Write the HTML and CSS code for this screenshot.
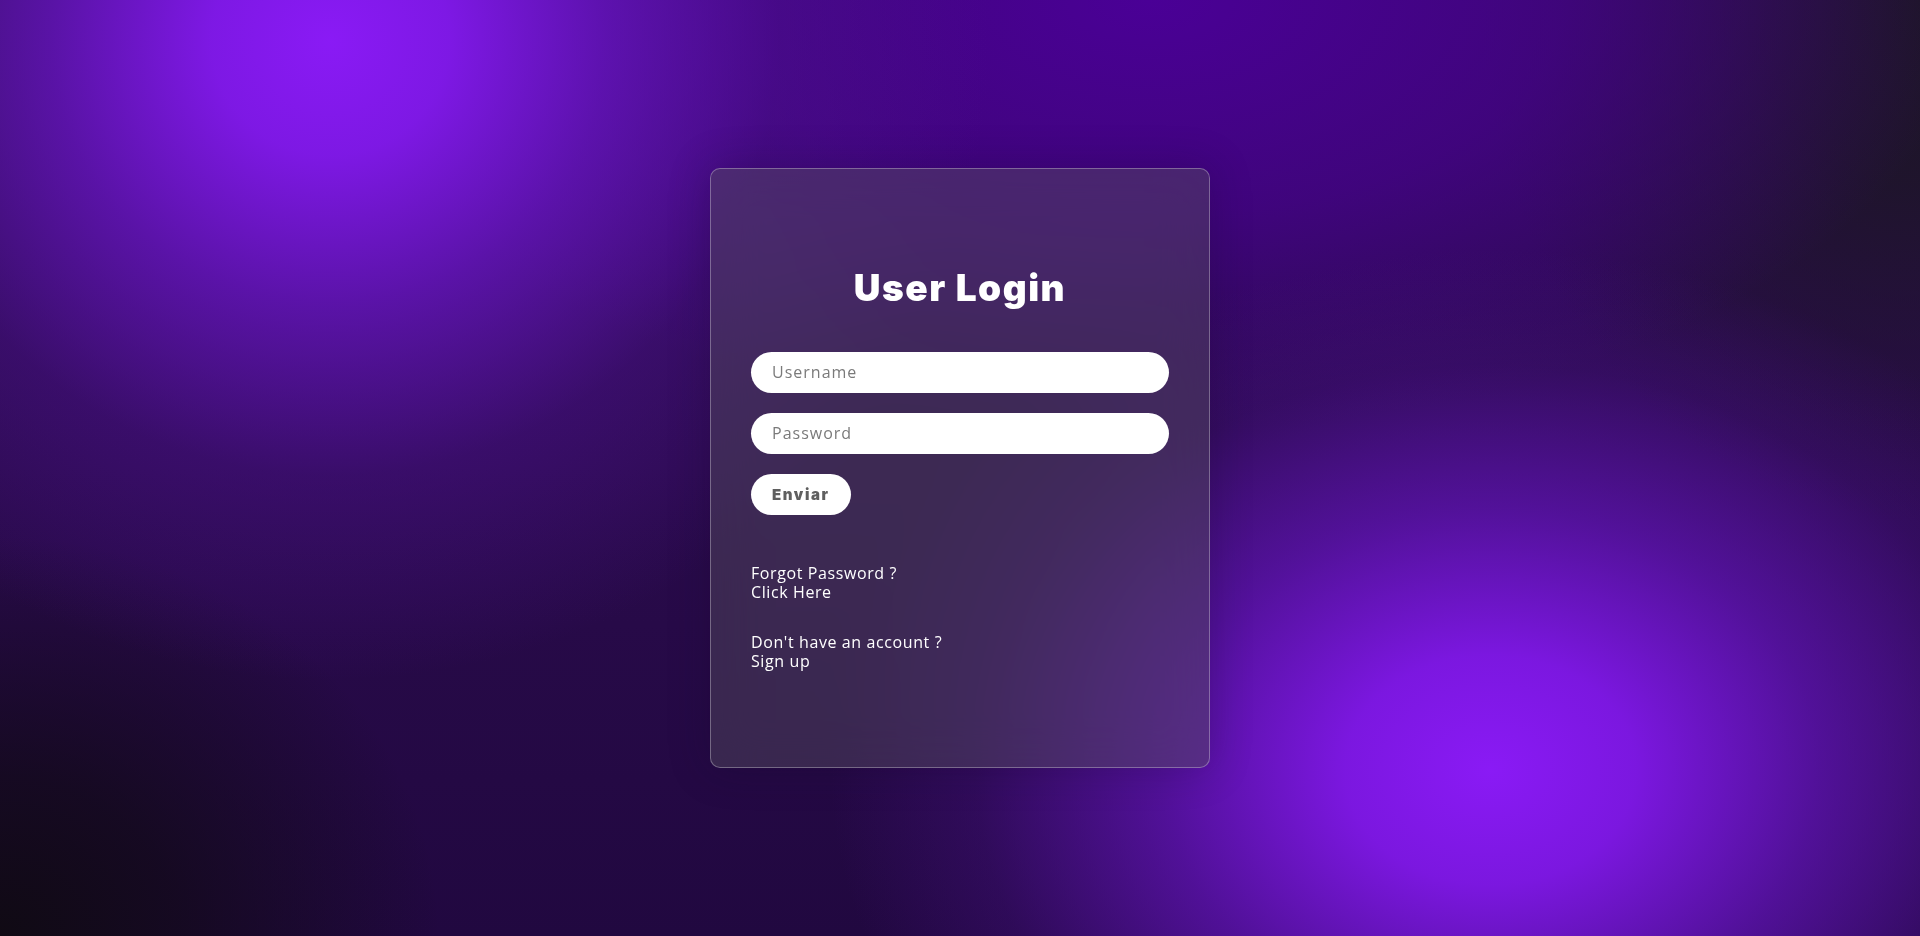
FILE: index.html
```html
<!DOCTYPE html>
<html lang="en">
<head>
<meta charset="utf-8">
<title>User Login</title>
<link rel="stylesheet" href="styles.css">
</head>
<body>
  <main class="page">
    <form class="card" onsubmit="return false">
      <h1 class="title">User Login</h1>
      <input class="field" type="text" placeholder="Username">
      <input class="field" type="password" placeholder="Password">
      <button class="btn" type="submit">Enviar</button>
      <div class="links">
        <p class="link-block">Forgot Password ?<br><a href="#">Click Here</a></p>
        <p class="link-block">Don't have an account ?<br><a href="#">Sign up</a></p>
      </div>
    </form>
  </main>
</body>
</html>
```
FILE: styles.css
```css
* { box-sizing: border-box; }

html, body {
  margin: 0;
  height: 100%;
}

body {
  overflow: hidden;
  font-family: "Open Sans", "Liberation Sans", sans-serif;
  background:
    radial-gradient(ellipse 660px 640px at 330px 40px, rgba(138,26,245,1) 0%, rgba(130,25,236,0.95) 18%, rgba(105,21,196,0.75) 42%, rgba(80,17,150,0.4) 68%, rgba(60,12,120,0) 100%),
    radial-gradient(ellipse 660px 520px at 1490px 770px, rgba(138,26,245,1) 0%, rgba(128,24,232,0.95) 22%, rgba(100,20,188,0.7) 50%, rgba(72,16,135,0.35) 78%, rgba(60,10,110,0) 100%),
    radial-gradient(ellipse 820px 430px at 1150px 0px, rgba(74,0,150,1) 0%, rgba(70,2,140,0.75) 50%, rgba(60,0,120,0) 100%),
    radial-gradient(ellipse 440px 520px at 1920px 0px, rgba(28,22,36,1) 0%, rgba(28,22,36,0.8) 35%, rgba(28,22,36,0) 100%),
    radial-gradient(ellipse 440px 400px at 0px 936px, rgba(16,10,20,1) 0%, rgba(16,10,20,0.7) 40%, rgba(16,10,20,0) 100%),
    linear-gradient(180deg, #2c0d50 0%, #2a0b4c 50%, #210840 100%);
}

.page {
  height: 100%;
  display: flex;
  align-items: center;
  justify-content: center;
}

.card {
  width: 500px;
  height: 600px;
  padding: 40px;
  display: flex;
  flex-direction: column;
  justify-content: center;
  align-items: stretch;
  border: 1px solid rgba(255,255,255,0.3);
  border-radius: 10px;
  background: rgba(85,77,94,0.45);
  backdrop-filter: blur(24px);
  -webkit-backdrop-filter: blur(24px);
  box-shadow: 0 0 40px rgba(20,0,40,0.25);
}

.title {
  margin: 0 0 42px;
  font-family: "Inter", "Lato", "Liberation Sans", sans-serif;
  font-weight: 900;
  font-size: 37px;
  line-height: 44px;
  letter-spacing: 1.5px;
  color: #fff;
  text-align: center;
}

.field {
  display: block;
  width: 100%;
  height: 41px;
  margin: 0 0 20px;
  padding: 0 21px;
  border: none;
  border-radius: 21px;
  background: #fff;
  font-family: "Open Sans", "Liberation Sans", sans-serif;
  font-size: 16px;
  letter-spacing: 1px;
  color: #333;
  outline: none;
}

.field::placeholder {
  color: #7a7a7a;
}

.btn {
  align-self: flex-start;
  height: 41px;
  padding: 0 21px;
  border: none;
  border-radius: 21px;
  background: #fff;
  font-family: "Inter", "Lato", "Liberation Sans", sans-serif;
  font-weight: 900;
  font-size: 15px;
  letter-spacing: 1.6px;
  color: #5f5f5f;
  cursor: pointer;
}

.links {
  margin-top: 49px;
  display: flex;
  flex-direction: column;
  gap: 31px;
}

.link-block {
  margin: 0;
  font-size: 16px;
  line-height: 19px;
  letter-spacing: 0.6px;
  color: #fff;
}

.link-block a {
  color: #fff;
  text-decoration: none;
}
```
